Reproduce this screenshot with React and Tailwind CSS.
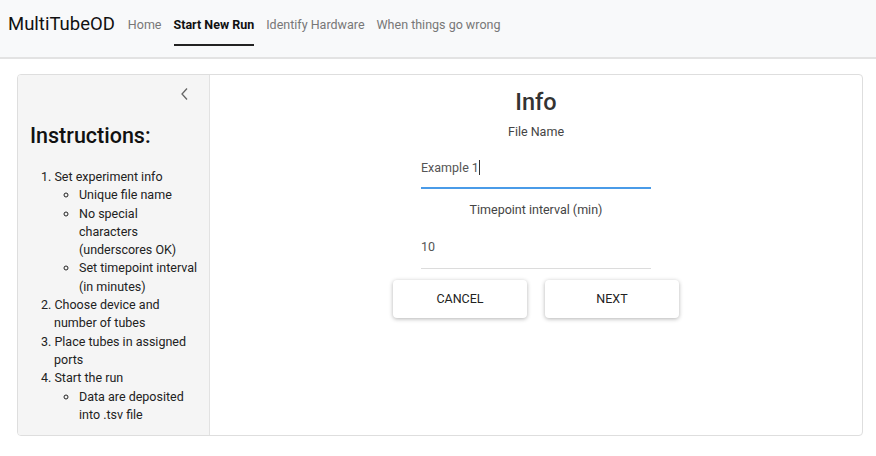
import React, { useState } from 'react';

const navItems = ['Home', 'Start New Run', 'Identify Hardware', 'When things go wrong'];

const Field = ({ label, value, focused, gap }) => (
  <div className="flex flex-col items-center">
    <p className="text-[12.5px] text-[#444] leading-[18px]">{label}</p>
    <div
      className={`w-[230px] text-[12.5px] leading-[18px] text-[#555] ${gap} ${
        focused ? 'border-b-2 border-[#4a9be8] pb-[10px]' : 'border-b border-[#dcdcdc] pb-[12px]'
      }`}
    >
      {value}
      {focused && <span className="inline-block w-px h-[15px] bg-[#333] align-[-3px]" />}
    </div>
  </div>
);

const App = () => {
  const [active] = useState('Start New Run');

  return (
    <div className="w-[876px] h-[456px] bg-white font-['Roboto',sans-serif] text-[#222] overflow-hidden">
      {/* Navbar */}
      <div className="h-[59px] bg-[#f8f9fa] border-b-2 border-[#e3e3e3] px-2">
        <div className="h-[50px] flex items-center">
          <span className="text-[18.5px] text-[#111] mr-[13px]">MultiTubeOD</span>
          <nav className="flex gap-3 h-full">
            {navItems.map((item) => (
              <div key={item} className="relative flex items-center h-full">
                <span
                  className={`text-[12.5px] ${
                    item === active ? 'font-bold text-[#111]' : 'text-[#777]'
                  }`}
                >
                  {item}
                </span>
                {item === active && (
                  <span className="absolute left-0 right-0 top-[44px] h-[2px] bg-[#222]" />
                )}
              </div>
            ))}
          </nav>
        </div>
      </div>

      {/* Card */}
      <div className="ml-[17px] mr-[13px] mt-[15px] h-[362px] border border-[#dedede] rounded flex overflow-hidden">
        {/* Sidebar */}
        <aside className="w-[192px] bg-[#f5f5f5] border-r border-[#e2e2e2] flex flex-col shrink-0 pr-[11px]">
          <div className="flex justify-end pr-[9px] pt-[12px]">
            <svg width="9" height="14" viewBox="0 0 9 14" fill="none">
              <path d="M7 1.5 L2 7 L7 12.5" stroke="#666" strokeWidth="1.3" />
            </svg>
          </div>
          <h2 className="ml-[12px] mt-[21px] text-[21.5px] font-medium text-[#111] leading-[28px]">
            Instructions:
          </h2>
          <ol className="mt-[18px] ml-[23px] text-[12.5px] leading-[18.3px] text-[#222] list-none">
            <li>
              1. Set experiment info
              <ul className="ml-[25px] list-[circle] pl-[13px]">
                <li>Unique file name</li>
                <li>No special characters (underscores OK)</li>
                <li>Set timepoint interval (in minutes)</li>
              </ul>
            </li>
            <li className="pl-[13px] -indent-[13px]">2. Choose device and number of tubes</li>
            <li className="pl-[13px] -indent-[13px]">3. Place tubes in assigned ports</li>
            <li>
              4. Start the run
              <ul className="ml-[25px] list-[circle] pl-[13px]">
                <li>Data are deposited into .tsv file</li>
              </ul>
            </li>
          </ol>
        </aside>

        {/* Main */}
        <main className="flex-1 flex flex-col items-center pt-[12px]">
          <h1 className="text-[23.5px] font-medium text-[#333] leading-[30px]">Info</h1>
          <div className="mt-[6px]">
            <Field label="File Name" value="Example 1" focused gap="mt-[18px]" />
          </div>
          <div className="mt-[12px]">
            <Field label="Timepoint interval (min)" value="10" gap="mt-[19px]" />
          </div>
          <div className="flex gap-[18px] mt-[11px]">
            <button className="w-[134px] h-[38px] bg-white rounded text-[12.5px] text-[#222] shadow-[0_1px_4px_rgba(0,0,0,0.3)]">
              CANCEL
            </button>
            <button className="w-[134px] h-[38px] bg-white rounded text-[12.5px] text-[#222] shadow-[0_1px_4px_rgba(0,0,0,0.3)]">
              NEXT
            </button>
          </div>
        </main>
      </div>
    </div>
  );
};

export default App;
